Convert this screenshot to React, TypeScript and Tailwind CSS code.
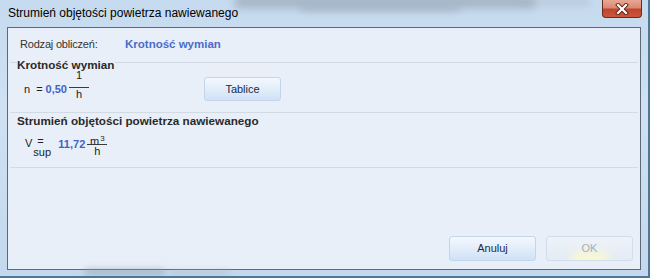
import React from "react";

function Frac({ num, den, numH, className }: { num: React.ReactNode; den: React.ReactNode; numH: string; className?: string }) {
  return (
    <div className={"relative flex flex-col items-stretch w-[20px] shrink-0 " + (className ?? "")}>
      <div className={"flex items-start justify-center leading-[13px] " + numH}>{num}</div>
      <div className="h-px bg-[#3a3a3a]" />
      <div className="flex justify-center leading-[13px]">{den}</div>
    </div>
  );
}

function WinButton({ children, disabled, className }: { children: React.ReactNode; disabled?: boolean; className?: string }) {
  return (
    <div
      className={
        "relative flex items-center justify-center rounded-[3px] border overflow-hidden text-[11px] " +
        (disabled
          ? "border-[#d3dde9] bg-[linear-gradient(#eef3f9,#e3ebf5)] text-[#a7aeb6] "
          : "border-[#c3d5ea] bg-[linear-gradient(#f3f8fd_0%,#e4eefa_45%,#d0e2f6_100%)] text-[#1c2c44] ") +
        (className ?? "")
      }
    >
      {disabled && (
        <div className="absolute left-1/2 -translate-x-1/2 bottom-[-6px] w-[40px] h-[14px] rounded-full bg-[#fffbc8] blur-[5px] opacity-80" />
      )}
      <span className="relative">{children}</span>
    </div>
  );
}

export default function App() {
  return (
    <div className="w-[650px] h-[278px] relative overflow-hidden font-['Liberation_Sans',Arial,sans-serif] bg-[linear-gradient(180deg,#c6daef_0%,#cfe1f3_40%,#c3d8ee_100%)] border-r-2 border-b-2 border-[#4f7896]">
      {/* blurred background showing through glass */}
      <div className="absolute left-[235px] top-[-4px] w-[300px] h-[12px] bg-[#8d9aa8] blur-[4px] opacity-60" />
      <div className="absolute left-[300px] top-[6px] w-[160px] h-[6px] bg-[#9aa8b6] blur-[3px] opacity-50" />
      <div className="absolute left-[520px] top-[-2px] w-[70px] h-[8px] bg-[#a9b7c6] blur-[3px] opacity-40" />
      <div className="absolute left-[85px] bottom-[1px] w-[80px] h-[6px] bg-[#8f9fae] blur-[3px] opacity-60" />
      <div className="absolute left-[170px] bottom-[1px] w-[60px] h-[5px] bg-[#a3b1bf] blur-[3px] opacity-40" />

      {/* close button */}
      <div className="absolute top-0 right-[6px] w-[40px] h-[18px] rounded-b-[4px] border border-t-0 border-[#6a2a1e] overflow-hidden bg-[linear-gradient(180deg,#e7a894_0%,#d88a72_45%,#c2452c_55%,#c9583c_100%)] flex items-center justify-center">
        <svg width="14" height="12" viewBox="0 0 14 12">
          <path d="M3 2 L11 10 M11 2 L3 10" stroke="#5b2216" strokeWidth="4" strokeLinecap="square" />
          <path d="M3 2 L11 10 M11 2 L3 10" stroke="#ffffff" strokeWidth="2.2" strokeLinecap="square" />
        </svg>
      </div>

      {/* title bar */}
      <div className="relative h-[27px] flex items-center pl-[8px] pb-[1px] text-[12px] text-black">
        Strumień objętości powietrza nawiewanego
      </div>

      {/* client area */}
      <div className="mx-[7px] h-[243px] border border-[#5d6976] bg-[#e9eff8] flex flex-col text-[11px] text-[#222]">
        {/* Rodzaj obliczeń */}
        <div className="h-[34px] shrink-0 pt-[8px] pl-[12px] flex items-start leading-[16px]">
          <span className="w-[105px] tracking-[-0.2px] text-[#333]">Rodzaj obliczeń:</span>
          <span className="font-bold text-[11.5px] text-[#4a6ccc]">Krotność wymian</span>
        </div>

        {/* Group 1 */}
        <div className="mx-[2px] border-t border-[#d2dae3] h-[50px] shrink-0">
          <div className="-mt-[5px] pl-[7px] h-[14px] leading-[14px]">
            <span className="font-bold text-[11.7px] text-[#2a2a2a] bg-[#e9eff8] pr-[1px] leading-[12px] inline-block">Krotność wymian</span>
          </div>
          <div className="mt-[5px] h-[24px] flex items-center">
            <div className="w-[194px] shrink-0 pl-[14px] flex items-center h-[24px]">
              <span className="leading-[13px]">n</span>
              <span className="ml-[6px] leading-[13px]">=</span>
              <span className="ml-[3px] font-bold text-[#3f63c8] leading-[13px]">0,50</span>
              <Frac className="self-start -mt-[8px] ml-[2px]" numH="h-[18px]" num="1" den="h" />
            </div>
            <WinButton className="w-[77px] h-[24px]">Tablice</WinButton>
          </div>
        </div>

        {/* Group 2 */}
        <div className="mx-[2px] border-t border-b border-[#d2dae3] h-[56px] shrink-0">
          <div className="mt-[1px] pl-[7px] leading-[14px]">
            <span className="font-bold text-[11.7px] text-[#2a2a2a]">Strumień objętości powietrza nawiewanego</span>
          </div>
          <div className="mt-[3px] h-[30px] pl-[15px] flex items-start">
            <span className="mt-[6px] leading-[13px]">V</span>
            <div className="relative w-[20px] h-[30px] ml-[1px]">
              <span className="absolute left-[4px] top-[4px] leading-[13px]">=</span>
              <span className="absolute left-0 top-[15px] leading-[13px]">sup</span>
            </div>
            <span className="ml-[5px] mt-[7px] font-bold text-[#3f63c8] leading-[13px]">11,72</span>
            <Frac
              className="ml-[2px] mt-[1px]"
              numH="h-[12px]"
              num={
                <span>
                  m<span className="text-[8px] align-[4px] ml-[1px]">3</span>
                </span>
              }
              den="h"
            />
          </div>
        </div>

        <div className="flex-1" />

        {/* buttons */}
        <div className="flex justify-end gap-[10px] pr-[7px] pb-[8px]">
          <WinButton className="w-[87px] h-[25px]">Anuluj</WinButton>
          <WinButton disabled className="w-[87px] h-[25px]">OK</WinButton>
        </div>
      </div>
    </div>
  );
}
